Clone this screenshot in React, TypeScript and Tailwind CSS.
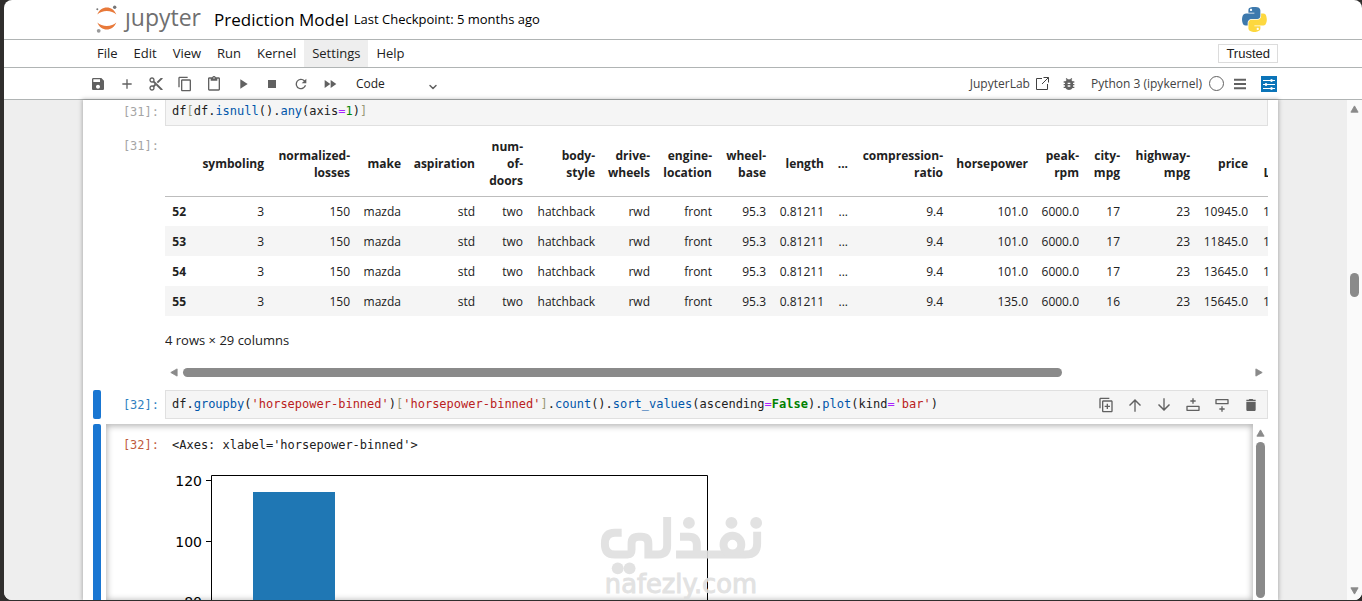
import React from 'react';
import { ChevronDown } from 'lucide-react';

const columns = [
  { name: '', width: 'w-[27px]' },
  { name: 'symboling', width: 'w-[78px]' },
  { name: 'normalized-losses', width: 'w-[86px]' },
  { name: 'make', width: 'w-[51px]' },
  { name: 'aspiration', width: 'w-[74px]' },
  { name: 'num-of-doors', width: 'w-[48px]' },
  { name: 'body-style', width: 'w-[72px]' },
  { name: 'drive-wheels', width: 'w-[55px]' },
  { name: 'engine-location', width: 'w-[62px]' },
  { name: 'wheel-base', width: 'w-[54px]' },
  { name: 'length', width: 'w-[58px]' },
  { name: '...', width: 'w-[24px]' },
  { name: 'compression-ratio', width: 'w-[95px]' },
  { name: 'horsepower', width: 'w-[85px]' },
  { name: 'peak-rpm', width: 'w-[51px]' },
  { name: 'city-mpg', width: 'w-[41px]' },
  { name: 'highway-mpg', width: 'w-[70px]' },
  { name: 'price', width: 'w-[58px]' },
  { name: 'city-L/100km', width: 'w-[73px]' },
];

const rows = [
  ['52', '3', '150', 'mazda', 'std', 'two', 'hatchback', 'rwd', 'front', '95.3', '0.81211', '...', '9.4', '101.0', '6000.0', '17', '23', '10945.0', '13.823529'],
  ['53', '3', '150', 'mazda', 'std', 'two', 'hatchback', 'rwd', 'front', '95.3', '0.81211', '...', '9.4', '101.0', '6000.0', '17', '23', '11845.0', '13.823529'],
  ['54', '3', '150', 'mazda', 'std', 'two', 'hatchback', 'rwd', 'front', '95.3', '0.81211', '...', '9.4', '101.0', '6000.0', '17', '23', '13645.0', '13.823529'],
  ['55', '3', '150', 'mazda', 'std', 'two', 'hatchback', 'rwd', 'front', '95.3', '0.81211', '...', '9.4', '135.0', '6000.0', '16', '23', '15645.0', '14.687500'],
];

const menus = ['File', 'Edit', 'View', 'Run', 'Kernel', 'Settings', 'Help'];

// 24x24 icon paths
const toolbarIcons = [
  { label: 'Save', d: 'M17 3H5c-1.1 0-2 .9-2 2v14c0 1.1.9 2 2 2h14c1.1 0 2-.9 2-2V7l-4-4zm-5 16c-1.66 0-3-1.34-3-3s1.34-3 3-3 3 1.34 3 3-1.34 3-3 3zm3-10H5V5h10v4z' },
  { label: 'Insert cell', d: 'M19 13h-6v6h-2v-6H5v-2h6V5h2v6h6v2z' },
  { label: 'Cut', d: 'M9.64 7.64c.23-.5.36-1.05.36-1.64 0-2.21-1.79-4-4-4S2 3.79 2 6s1.79 4 4 4c.59 0 1.14-.13 1.64-.36L10 12l-2.36 2.36C7.14 14.13 6.59 14 6 14c-2.21 0-4 1.79-4 4s1.79 4 4 4 4-1.79 4-4c0-.59-.13-1.14-.36-1.64L12 14l7 7h3v-1L9.64 7.64zM6 8c-1.1 0-2-.89-2-2s.9-2 2-2 2 .89 2 2-.9 2-2 2zm0 12c-1.1 0-2-.89-2-2s.9-2 2-2 2 .89 2 2-.9 2-2 2zm6-7.5c-.28 0-.5-.22-.5-.5s.22-.5.5-.5.5.22.5.5-.22.5-.5.5zM19 3l-6 6 2 2 7-7V3z' },
  { label: 'Copy', d: 'M16 1H4c-1.1 0-2 .9-2 2v14h2V3h12V1zm3 4H8c-1.1 0-2 .9-2 2v14c0 1.1.9 2 2 2h11c1.1 0 2-.9 2-2V7c0-1.1-.9-2-2-2zm0 16H8V7h11v14z' },
  { label: 'Paste', d: 'M19 2h-4.18C14.4.84 13.3 0 12 0c-1.3 0-2.4.84-2.82 2H5c-1.1 0-2 .9-2 2v16c0 1.1.9 2 2 2h14c1.1 0 2-.9 2-2V4c0-1.1-.9-2-2-2zm-7 0c.55 0 1 .45 1 1s-.45 1-1 1-1-.45-1-1 .45-1 1-1zm7 18H5V4h2v3h10V4h2v16z' },
  { label: 'Run', d: 'M8 5v14l11-7z' },
  { label: 'Interrupt', d: 'M6 6h12v12H6z' },
  { label: 'Restart', d: 'M17.65 6.35A8 8 0 1 0 19.73 14h-2.08A6 6 0 1 1 12 6c1.66 0 3.14.69 4.22 1.78L13 11h7V4l-2.35 2.35z' },
  { label: 'Restart and run all', d: 'M4 18l8.5-6L4 6v12zm9-12v12l8.5-6L13 6z' },
];

const cellIcons = [
  { label: 'Duplicate', d: 'M2 17V3c0-1.1.9-2 2-2h13v2H4v14H2zM8 5h12c1.1 0 2 .9 2 2v14c0 1.1-.9 2-2 2H8c-1.1 0-2-.9-2-2V7c0-1.1.9-2 2-2zm0 2v14h12V7H8zm5 3h2v3h3v2h-3v3h-2v-3h-3v-2h3v-3z' },
  { label: 'Move up', d: 'M3 12l1.5 1.5L11 7v15h2V7l6.5 6.5L21 12l-9-9-9 9z' },
  { label: 'Move down', d: 'M21 12l-1.5-1.5L13 17V2h-2v15l-6.5-6.5L3 12l9 9 9-9z' },
  { label: 'Insert above', d: 'M11 2h2v3h3v2h-3v3h-2V7H8V5h3V2zM3 13h18c.6 0 1 .4 1 1v6c0 .6-.4 1-1 1H3c-.6 0-1-.4-1-1v-6c0-.6.4-1 1-1zm1 2v4h16v-4H4z' },
  { label: 'Insert below', d: 'M3 3h18c.6 0 1 .4 1 1v6c0 .6-.4 1-1 1H3c-.6 0-1-.4-1-1V4c0-.6.4-1 1-1zm1 2v4h16V5H4zm7 9h2v3h3v2h-3v3h-2v-3H8v-2h3v-3z' },
  { label: 'Delete', d: 'M5 19c0 1.1.9 2 2 2h10c1.1 0 2-.9 2-2V7H5v12zM19 4h-3.5l-1-1h-5l-1 1H5v2h14V4z' },
];

function Icon({ d, className }: { d: string; className?: string }) {
  return (
    <svg viewBox="0 0 24 24" fill="currentColor" fillRule="evenodd" className={className ?? 'size-4'}>
      <path d={d} />
    </svg>
  );
}

function Arrow({ d }: { d: string }) {
  return (
    <svg viewBox="0 0 10 10" className="size-[9px] shrink-0 fill-[#8a8a8a] stroke-[#8a8a8a]" strokeLinejoin="round">
      <path d={d} />
    </svg>
  );
}

function JupyterLogo() {
  return (
    <svg viewBox="0 0 24 30" className="mb-[2px] h-[30px] w-6">
      <path d="M3.300 10.500C5 6 8.800 3.500 12.800 3.500S20.600 6 22.300 10.500C20 8.200 16.500 7 12.800 7S5.600 8.200 3.300 10.500Z" fill="#e8793a" />
      <path d="M3.300 18.500C5 23 8.800 25.500 12.800 25.500S20.600 23 22.300 18.500C20 20.800 16.500 22 12.800 22S5.600 20.800 3.300 18.500Z" fill="#e8793a" />
      <circle cx="20.700" cy="3.200" r="1.700" fill="#767677" />
      <circle cx="3.300" cy="5.200" r="1" fill="#767677" />
      <circle cx="4.700" cy="26.800" r="1.900" fill="#9a9a9b" />
    </svg>
  );
}

function PythonLogo() {
  return (
    <svg viewBox="0 0 112 112" className="size-[25px]">
      <path fill="#3d79ad" d="M54.900 0C50.300 0 46 .4 42.100 1.100 30.800 3.100 28.700 7.300 28.700 15v10.300h26.800v3.400H18.700c-7.800 0-14.600 4.700-16.700 13.600-2.500 10.200-2.600 16.600 0 27.200 1.900 7.900 6.500 13.600 14.200 13.600h9.200V70.900c0-8.800 7.700-16.700 16.700-16.700h26.700c7.400 0 13.400-6.100 13.400-13.600V15c0-7.200-6.100-12.700-13.400-13.900C64.200.3 59.500 0 54.900 0zM40.400 8.200c2.800 0 5 2.300 5 5.100s-2.200 5.100-5 5.100-5-2.300-5-5.100 2.200-5.100 5-5.100z" />
      <path fill="#fdd83f" d="M85.600 28.700v11.900c0 9.200-7.800 17-16.700 17H42.100c-7.300 0-13.400 6.300-13.400 13.600v25.500c0 7.300 6.300 11.500 13.400 13.600 8.500 2.500 16.600 2.900 26.800 0 6.700-2 13.400-5.900 13.400-13.600V86.500H55.500v-3.400h40.200c7.800 0 10.700-5.400 13.400-13.600 2.800-8.400 2.700-16.500 0-27.200-1.900-7.800-5.600-13.600-13.400-13.600H85.600zM70.600 93.300c2.800 0 5 2.300 5 5.100s-2.200 5.100-5 5.100-5-2.300-5-5.100 2.200-5.100 5-5.100z" />
    </svg>
  );
}

function Header() {
  return (
    <header className="flex h-10 items-center border-b border-[#b0b4b4] pl-[90px] pr-[95px]">
      <JupyterLogo />
      <span className="ml-[7px] pb-[6px] text-[23px] leading-8 text-[#6f6f70]">ȷupyter</span>
      <h1 className="ml-[13px] text-[17px] leading-6 text-black">Prediction Model</h1>
      <span className="ml-[5px] text-[13px] text-black">Last Checkpoint: 5 months ago</span>
      <div className="ml-auto">
        <PythonLogo />
      </div>
    </header>
  );
}

function MenuBar() {
  return (
    <nav className="flex h-7 items-center border-b border-[#b0b4b4] pl-[85px] pr-[84px] text-[13px]">
      {menus.map((menu) => (
        <button
          key={menu}
          className={menu === 'Settings' ? 'h-full bg-[#eeeeee] px-2' : 'h-full px-2'}
        >
          {menu}
        </button>
      ))}
      <button className="ml-auto h-[19px] border border-[#dcdcdc] px-[7px] font-['Liberation_Sans',sans-serif] text-[13px] leading-4">
        Trusted
      </button>
    </nav>
  );
}

function Toolbar() {
  return (
    <div className="flex h-8 items-center border-b border-[#b0b4b4] pl-[86px] pr-[85px] text-[#616161]">
      <div className="flex gap-[13px]">
        {toolbarIcons.map((icon) => (
          <button key={icon.label} aria-label={icon.label}>
            <Icon d={icon.d} />
          </button>
        ))}
      </div>
      <div className="ml-[18px] flex w-[83px] items-center">
        <select aria-label="Cell type" className="flex-1 appearance-none text-[#212121]">
          <option>Code</option>
        </select>
        <ChevronDown className="mt-[6px] size-3" strokeWidth={3} />
      </div>
      <div className="ml-auto flex items-center text-[#424242]">
        <a href="#lab" className="flex items-center gap-1">
          JupyterLab
          <svg viewBox="0 0 16 16" className="size-4" fill="none" stroke="currentColor">
            <path d="M8 2.500H2.500v11h11V8M9.500 1.500h5v5M14.500 1.500L8 8" />
          </svg>
        </a>
        <button aria-label="Debugger" className="ml-[11px] text-[#616161]">
          <Icon d="M20 8h-2.810c-.45-.78-1.070-1.450-1.820-1.960L17 4.410 15.590 3l-2.170 2.170C12.960 5.060 12.490 5 12 5s-.96.06-1.410.17L8.410 3 7 4.410l1.620 1.630C7.880 6.550 7.260 7.220 6.810 8H4v2h2.090c-.05.33-.09.66-.09 1v1H4v2h2v1c0 .34.04.67.09 1H4v2h2.810c1.040 1.790 2.970 3 5.190 3s4.150-1.210 5.190-3H20v-2h-2.090c.05-.33.09-.66.09-1v-1h2v-2h-2v-1c0-.34-.04-.67-.09-1H20V8zm-6 8h-4v-2h4v2zm0-4h-4v-2h4v2z" />
        </button>
        <button className="ml-[14px]">Python 3 (ipykernel)</button>
        <span className="ml-[7px] size-[15px] rounded-full border border-[#616161]" />
        <button aria-label="Kernel menu" className="ml-2 text-[#616161]">
          <Icon d="M3 4h18v3H3zM3 10.500h18v3H3zM3 17h18v3H3z" />
        </button>
        <button aria-label="Property inspector" className="ml-[13px] bg-[#0b74b8] text-white">
          <svg viewBox="0 0 16 16" className="size-4" stroke="currentColor" fill="currentColor">
            <path d="M2 4.500h12M2 8.500h12M2 12.500h12" />
            <circle cx="10.500" cy="4.500" r="1" />
            <circle cx="5" cy="8.500" r="1" />
            <circle cx="10.500" cy="12.500" r="1" />
          </svg>
        </button>
      </div>
    </div>
  );
}

function Prompt({ children, color }: { children: string; color: string }) {
  return (
    <span className={`w-[65px] shrink-0 pr-[6px] text-right font-['DejaVu_Sans_Mono',monospace] text-xs ${color}`}>
      {children}
    </span>
  );
}

function DataTable() {
  return (
    <table className="w-[1162px] table-fixed text-right">
      <colgroup>
        {columns.map((col) => (
          <col key={col.name} className={col.width} />
        ))}
      </colgroup>
      <thead>
        <tr className="h-16 border-b border-[#bdbdbd]">
          {columns.map((col) => (
            <th key={col.name} className="pr-[6px] align-middle leading-[17px] last:pr-3">
              {col.name.split('-').map((part, i, all) => (
                <span key={part} className="block">
                  {i < all.length - 1 ? `${part}-` : part}
                </span>
              ))}
            </th>
          ))}
        </tr>
      </thead>
      <tbody>
        {rows.map((row) => (
          <tr key={row[0]} className="h-[30px] even:bg-[#f5f5f5]">
            {row.map((value, i) =>
              i === 0 ? (
                <th key={i} className="pr-[6px] pt-[2px]">{value}</th>
              ) : (
                <td key={i} className="pr-[6px] pt-[2px]">{value}</td>
              )
            )}
          </tr>
        ))}
      </tbody>
    </table>
  );
}

function Chart() {
  return (
    <svg width="560" height="150" className="mt-[13px] ml-[10px] block" fontFamily="'DejaVu Sans', sans-serif" fontSize="14">
      <rect x="78" y="26" width="82" height="300" fill="#1f77b4" />
      <path d="M36.500 160V9.500H532.500V160M31 14.500h5M31 75.500h5M31 135.500h5" fill="none" stroke="#000" />
      <text x="27" y="20" textAnchor="end">120</text>
      <text x="27" y="81" textAnchor="end">100</text>
      <text x="27" y="141" textAnchor="end">80</text>
    </svg>
  );
}

function Watermark() {
  return (
    <svg viewBox="0 0 170 90" className="absolute left-[596px] top-[512px] h-[89px] w-[170px] opacity-90" aria-hidden="true">
      <g fill="none" stroke="#dfdfdf" strokeWidth="8">
        <path d="M25 21H18Q8 21 8 32Q8 43 18 43H31Q35 43 35 38V32Q35 25 42 25H45Q52 25 52 32V43H62Q71 43 71 34V5" />
        <path d="M84 25H93Q101 25 101 33V43M80 43H150Q162 43 162 32V20" />
        <circle cx="137" cy="33" r="9" />
      </g>
      <g fill="#dfdfdf">
        <circle cx="93" cy="11" r="6" />
        <circle cx="136" cy="11" r="6" />
        <circle cx="161" cy="11" r="6" />
        <circle cx="21" cy="57" r="6" />
        <circle cx="33" cy="57" r="6" />
        <text x="8" y="82" fontFamily="'DejaVu Sans', sans-serif" fontSize="26" stroke="#dfdfdf">nafezly.com</text>
      </g>
    </svg>
  );
}

export default function App() {
  return (
    <div className="relative h-screen overflow-hidden bg-[#302e2d] pb-px pl-1 font-['Open_Sans','Noto_Sans',sans-serif] text-xs text-[#212121]">
      <div className="flex h-full flex-col overflow-hidden rounded-lg bg-white">
        <Header />
        <MenuBar />
        <Toolbar />

        <div className="flex min-h-0 flex-1 bg-[#eeeeee]">
          <main className="ml-[79px] mr-[69px] flex min-w-0 flex-1 flex-col bg-white pl-[10px] shadow-[0_0_4px_1px_rgba(0,0,0,0.25)]">
            {/* Cell 31 */}
            <div className="flex pl-[7px] pr-[10px]">
              <Prompt color="pt-[4px] text-[#a5a5a5]">[31]:</Prompt>
              <pre className="h-[26px] flex-1 border border-t-0 border-[#e0e0e0] bg-[#f5f5f5] pl-[6px] pt-[3px] font-['DejaVu_Sans_Mono',monospace] leading-4">
                df<span className="text-[#999977]">[</span>df.<span className="text-[#0055aa]">isnull</span>().<span className="text-[#0055aa]">any</span>(axis<span className="text-[#aa22ff]">=</span><span className="text-[#008800]">1</span>)<span className="text-[#999977]">]</span>
              </pre>
            </div>
            <div className="flex pl-[7px] pr-[10px] pt-[6px]">
              <Prompt color="pt-[6px] text-[#a5a5a5]">[31]:</Prompt>
              <div className="min-w-0 flex-1 overflow-hidden">
                <DataTable />
                <p className="mt-4 text-[13px] leading-4">4 rows × 29 columns</p>
                <div className="mt-[19px] flex h-[10px] items-center pl-1 pr-1">
                  <Arrow d="M9 1v8L2 5z" />
                  <div className="ml-[5px] flex-1">
                    <div className="h-[9px] w-[82%] rounded-full bg-[#8a8a8a]" />
                  </div>
                  <Arrow d="M1 1v8l7-4z" />
                </div>
              </div>
            </div>

            {/* Cell 32 */}
            <div className="mt-[13px] flex pr-[10px]">
              <div className="w-2 shrink-0 rounded-[2px] bg-[#1976d2]" />
              <span className="w-[64px] shrink-0 pr-[6px] pt-[7px] text-right font-['DejaVu_Sans_Mono',monospace] text-[#307fc1]">[32]:</span>
              <div className="flex h-[29px] min-w-0 flex-1 items-center border border-[#e0e0e0] bg-[#f5f5f5] pl-[6px] pr-2">
                <pre className="flex-1 pb-[2px] font-['DejaVu_Sans_Mono',monospace]">
                  df.<span className="text-[#0055aa]">groupby</span>(<span className="text-[#ba2121]">'horsepower-binned'</span>)<span className="text-[#999977]">[</span><span className="text-[#ba2121]">'horsepower-binned'</span><span className="text-[#999977]">]</span>.<span className="text-[#0055aa]">count</span>().<span className="text-[#0055aa]">sort_values</span>(ascending<span className="text-[#aa22ff]">=</span><span className="font-bold text-[#008000]">False</span>).<span className="text-[#0055aa]">plot</span>(kind<span className="text-[#aa22ff]">=</span><span className="text-[#ba2121]">'bar'</span>)
                </pre>
                <div className="flex gap-[13px] text-[#616161]">
                  {cellIcons.map((icon) => (
                    <button key={icon.label} aria-label={icon.label}>
                      <Icon d={icon.d} />
                    </button>
                  ))}
                </div>
              </div>
            </div>

            <div className="mt-[5px] flex min-h-0 flex-1 pr-[10px]">
              <div className="w-2 shrink-0 rounded-t-[2px] bg-[#1976d2]" />
              <div className="ml-[5px] flex min-w-0 flex-1 overflow-hidden shadow-[inset_0_1px_6px_1px_rgba(0,0,0,0.3)]">
                <span className="w-[59px] shrink-0 pr-[6px] pt-[13px] text-right font-['DejaVu_Sans_Mono',monospace] text-[#bf5b3d]">[32]:</span>
                <div className="min-w-0 flex-1">
                  <pre className="pl-[7px] pt-[13px] font-['DejaVu_Sans_Mono',monospace]">{"<Axes: xlabel='horsepower-binned'>"}</pre>
                  <Chart />
                </div>
              </div>
              <div className="flex w-[15px] shrink-0 flex-col items-center gap-1 pb-[2px] pt-[5px]">
                <Arrow d="M1 8h8L5 1z" />
                <div className="w-[9px] flex-1 rounded-full bg-[#8a8a8a]" />
              </div>
            </div>
          </main>

          <div className="flex w-[15px] shrink-0 flex-col items-center bg-[#fafafa] pb-[5px] pt-[5px]">
            <Arrow d="M1 8h8L5 1z" />
            <div className="mt-[159px] h-6 w-[9px] rounded-full bg-[#8a8a8a]" />
            <div className="flex-1" />
            <Arrow d="M1 2h8L5 9z" />
          </div>
        </div>
      </div>
      <Watermark />
    </div>
  );
}
